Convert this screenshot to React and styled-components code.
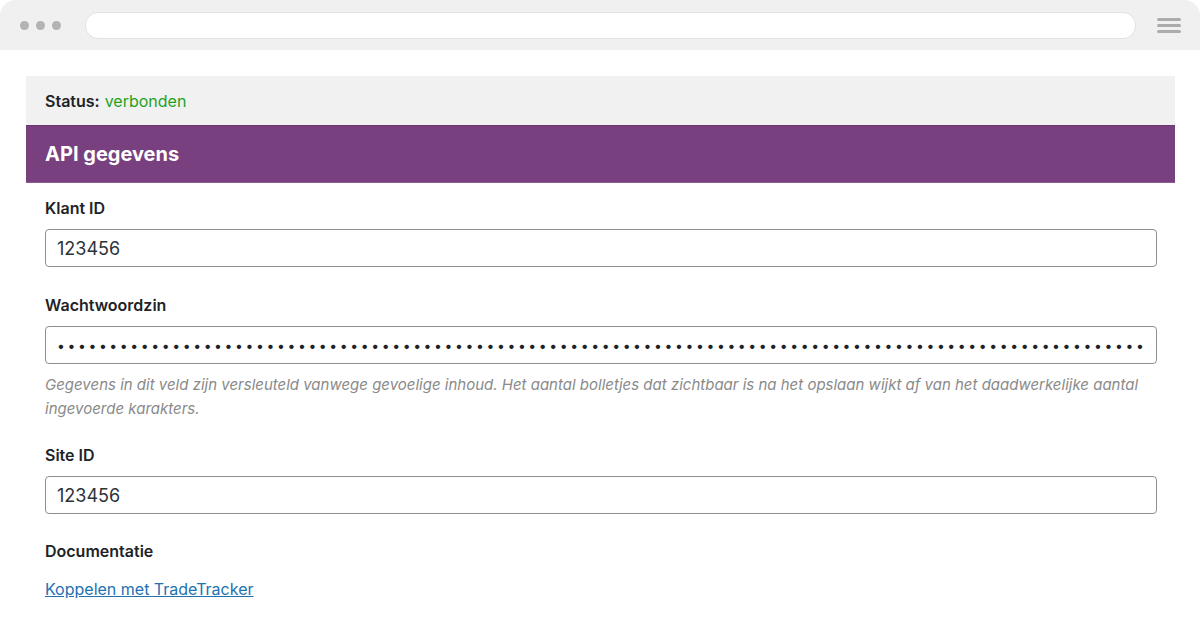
import React from 'react';
import styled, { createGlobalStyle } from 'styled-components';

const GlobalStyle = createGlobalStyle`
  html, body {
    margin: 0;
    padding: 0;
    background: #ffffff;
  }
  body {
    font-family: Inter, "Noto Sans", "Liberation Sans", sans-serif;
    color: #1d2327;
  }
`;

const Window = styled.div`
  width: 1200px;
  height: 635px;
  background: #ffffff;
  display: flex;
  flex-direction: column;
  overflow: hidden;
`;

const TitleBar = styled.div`
  height: 50px;
  flex: none;
  background: #f0f0f0;
  border-radius: 16px 16px 0 0;
  display: flex;
  align-items: center;
  padding: 0 19px 0 20px;
`;

const Dots = styled.div`
  display: flex;
  gap: 7px;
  width: 65px;
`;

const Dot = styled.span`
  width: 9px;
  height: 9px;
  border-radius: 50%;
  background: #b3b3b3;
`;

const AddressBar = styled.div`
  flex: 1;
  height: 25px;
  background: #ffffff;
  border: 1px solid #e2e2e2;
  border-radius: 13px;
  margin-right: 21px;
`;

const Burger = styled.div`
  display: flex;
  flex-direction: column;
  gap: 3px;
  width: 24px;
`;

const BurgerLine = styled.span`
  height: 3px;
  border-radius: 2px;
  background: #acacac;
`;

const Page = styled.main`
  padding: 26px 25px 0 26px;
`;

const StatusBar = styled.div`
  height: 49px;
  background: #f1f1f1;
  display: flex;
  align-items: center;
  padding: 0 19px;
  font-size: 16px;
`;

const StatusLabel = styled.strong`
  font-weight: 600;
  margin-right: 5px;
`;

const StatusValue = styled.span`
  color: #1ea21e;
`;

const SectionHeader = styled.h2`
  margin: 0;
  height: 58px;
  box-sizing: border-box;
  background: #78407e;
  border-top: 1px solid #6c3572;
  border-bottom: 1px solid #8d5a92;
  color: #ffffff;
  font-size: 20px;
  font-weight: 700;
  display: flex;
  align-items: center;
  padding: 0 19px;
`;

const Form = styled.form`
  padding: 15px 18px 0 19px;
  display: flex;
  flex-direction: column;
`;

const Field = styled.div`
  display: flex;
  flex-direction: column;
  margin-bottom: ${p => p.$space ?? 28}px;
`;

const Label = styled.label`
  font-size: 16px;
  font-weight: 600;
  line-height: 21px;
  margin-bottom: 10px;
`;

const Input = styled.input`
  box-sizing: border-box;
  width: 100%;
  height: 38px;
  border: 1px solid #8c8f94;
  border-radius: 4px;
  padding: 0 11px;
  font-family: inherit;
  font-size: 18px;
  color: #2c3338;
  background: #ffffff;
  outline: none;
`;

const SecretInput = styled(Input)`
  font-size: 14px;
  letter-spacing: 2.6px;
  color: #1d2327;
`;

const Help = styled.p`
  margin: 9px 0 0;
  font-size: 15px;
  line-height: 24px;
  font-style: italic;
  color: #8a8a8a;
`;

const DocLink = styled.a`
  font-size: 16px;
  color: #2271b1;
  text-decoration: underline;
  align-self: flex-start;
`;

export default function App() {
  const secret = 'x'.repeat(180);
  return (
    <>
      <GlobalStyle />
      <Window>
        <TitleBar>
          <Dots>
            <Dot />
            <Dot />
            <Dot />
          </Dots>
          <AddressBar />
          <Burger>
            <BurgerLine />
            <BurgerLine />
            <BurgerLine />
          </Burger>
        </TitleBar>
        <Page>
          <StatusBar>
            <StatusLabel>Status:</StatusLabel>
            <StatusValue>verbonden</StatusValue>
          </StatusBar>
          <SectionHeader>API gegevens</SectionHeader>
          <Form>
            <Field>
              <Label htmlFor="klant">Klant ID</Label>
              <Input id="klant" type="text" defaultValue="123456" />
            </Field>
            <Field $space={24}>
              <Label htmlFor="wachtwoord">Wachtwoordzin</Label>
              <SecretInput id="wachtwoord" type="password" defaultValue={secret} />
              <Help>
                Gegevens in dit veld zijn versleuteld vanwege gevoelige inhoud. Het aantal bolletjes dat zichtbaar is na het opslaan wijkt af van het daadwerkelijke aantal ingevoerde karakters.
              </Help>
            </Field>
            <Field $space={27}>
              <Label htmlFor="site">Site ID</Label>
              <Input id="site" type="text" defaultValue="123456" />
            </Field>
            <Field $space={7}>
              <Label as="span">Documentatie</Label>
            </Field>
            <DocLink href="#">Koppelen met TradeTracker</DocLink>
          </Form>
        </Page>
      </Window>
    </>
  );
}
